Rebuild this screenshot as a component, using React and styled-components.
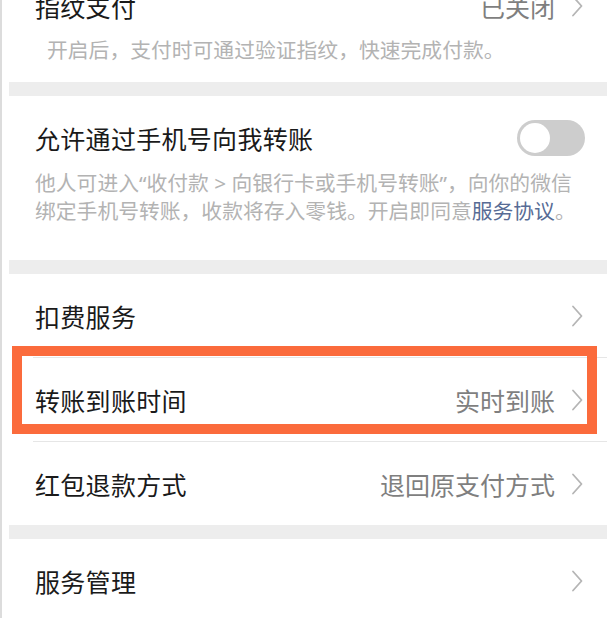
import React from "react";
import styled, { createGlobalStyle } from "styled-components";

const Global = createGlobalStyle`
  html, body { margin: 0; padding: 0; background: #fff; }
  body { font-family: "Noto Sans CJK SC", "Noto Sans", sans-serif; overflow: hidden; }
`;

const Page = styled.div`
  width: 607px;
  height: 618px;
  overflow: hidden;
  border-left: 2px solid #dcdcdc;
  box-sizing: border-box;
  padding-left: 7px;
  background: #fff;
`;

const Stack = styled.div`
  display: flex;
  flex-direction: column;
  gap: 14px;
  background: #ededed;
`;

const Section = styled.section`
  background: #fff;
  padding: ${(p) => p.$pad || "0"};
  margin-top: ${(p) => p.$mt || "0"};
`;

const HeadRow = styled.div`
  display: flex;
  align-items: center;
  justify-content: space-between;
  height: 36px;
  padding: 0 22px 0 26px;
`;

const Title = styled.span`
  font-size: 25px;
  line-height: 36px;
  color: #1a1a1a;
  letter-spacing: 0.3px;
`;

const Desc = styled.p`
  margin: ${(p) => p.$m || "0"};
  padding: 0 0 0 ${(p) => p.$indent || "26px"};
  font-family: "Noto Sans", "Noto Sans CJK SC", sans-serif;
  font-size: 20.8px;
  line-height: 28px;
  color: #b3b3b3;
  letter-spacing: 0;
  white-space: nowrap;
`;

const Link = styled.span`
  color: #576b95;
`;

const Toggle = styled.div`
  width: 68px;
  height: 36px;
  border-radius: 18px;
  background: #cdcdcd;
  position: relative;
  flex: none;
`;

const Knob = styled.div`
  position: absolute;
  left: 3px;
  top: 3px;
  width: 30px;
  height: 30px;
  border-radius: 50%;
  background: #fff;
`;

const Row = styled.div`
  position: relative;
  display: flex;
  align-items: center;
  justify-content: space-between;
  height: 83px;
  padding: 0 24px 0 26px;
  &:not(:first-child)::before {
    content: "";
    position: absolute;
    top: -1px;
    left: 24px;
    right: 0;
    height: 1px;
    background: #e6e6e6;
  }
  & + & {
    margin-top: 1px;
  }
`;

const Right = styled.div`
  display: flex;
  align-items: center;
  gap: 16px;
`;

const Value = styled.span`
  font-size: 25px;
  line-height: 36px;
  color: #7f7f7f;
`;

const Highlight = styled.div`
  position: absolute;
  top: -12px;
  bottom: 7px;
  left: 3px;
  right: 10px;
  border: 10px solid #fb6b3c;
  pointer-events: none;
`;

const Chevron = () => (
  <svg width="12" height="22" viewBox="0 0 12 22" style={{ display: "block" }}>
    <path d="M2 1.5 L10.5 11 L2 20.5" fill="none" stroke="#b5b5b5" strokeWidth="1.8" strokeLinecap="round" strokeLinejoin="round" />
  </svg>
);

export default function App() {
  return (
    <>
      <Global />
      <Page>
        <Stack>
          <Section $pad="0 0 18px" $mt="-12px">
            <HeadRow style={{ paddingRight: 24 }}>
              <Title>指纹支付</Title>
              <Right>
                <Value>已关闭</Value>
                <Chevron />
              </Right>
            </HeadRow>
            <Desc $m="12px 0 0" $indent="38px">开启后，支付时可通过验证指纹，快速完成付款。</Desc>
          </Section>
          <Section $pad="24px 0 35px">
            <HeadRow>
              <Title>允许通过手机号向我转账</Title>
              <Toggle>
                <Knob />
              </Toggle>
            </HeadRow>
            <Desc $m="13px 0 0">
              他人可进入“收付款 &gt; 向银行卡或手机号转账”，向你的微信
              <br />
              绑定手机号转账，收款将存入零钱。开启即同意<Link>服务协议</Link>。
            </Desc>
          </Section>
          <Section>
            <Row>
              <Title>扣费服务</Title>
              <Chevron />
            </Row>
            <Row>
              <Title>转账到账时间</Title>
              <Right>
                <Value>实时到账</Value>
                <Chevron />
              </Right>
              <Highlight />
            </Row>
            <Row>
              <Title>红包退款方式</Title>
              <Right>
                <Value>退回原支付方式</Value>
                <Chevron />
              </Right>
            </Row>
          </Section>
          <Section>
            <Row>
              <Title>服务管理</Title>
              <Chevron />
            </Row>
          </Section>
        </Stack>
      </Page>
    </>
  );
}
